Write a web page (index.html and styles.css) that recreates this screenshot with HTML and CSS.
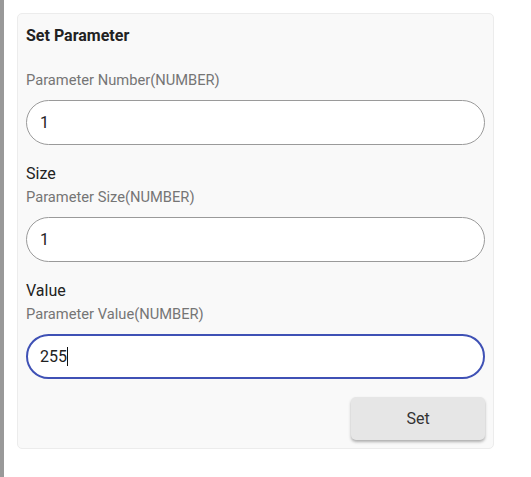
FILE: index.html
```html
<!DOCTYPE html>
<html>
<head>
<meta charset="utf-8">
<link rel="stylesheet" href="styles.css">
</head>
<body>
<div class="page">
  <div class="sidebar"><i></i><i></i><i></i><i></i><i></i><i></i></div>
  <div class="main">
    <div class="card">
      <div class="title">Set Parameter</div>
      <div class="label first">Parameter Number(NUMBER)</div>
      <div class="field"><span>1</span></div>
      <div class="name">Size</div>
      <div class="label">Parameter Size(NUMBER)</div>
      <div class="field"><span>1</span></div>
      <div class="name">Value</div>
      <div class="label">Parameter Value(NUMBER)</div>
      <div class="field focus"><span>255</span><span class="caret"></span></div>
      <div class="actions"><button class="btn">Set</button></div>
    </div>
  </div>
</div>
</body>
</html>
```
FILE: styles.css
```css
html, body { margin: 0; padding: 0; background: #fff; }
body { font-family: Roboto, "Noto Sans", sans-serif; color: #222; }
.page { display: flex; width: 531px; height: 477px; }
.sidebar { width: 4px; background: #999; display: flex; flex-direction: column; padding-top: 21px; }
.sidebar i { display: block; height: 1px; background: #aaa; margin-bottom: 78px; }
.main { flex: 1; padding: 13px 0 0 13px; }
.card { width: 459px; background: #f9f9f9; border: 1px solid #ececec; border-radius: 5px; padding: 12px 8px 8px 8px; display: flex; flex-direction: column; }
.title { font-size: 16px; font-weight: 700; line-height: 20px; color: #222; }
.label { font-size: 14.7px; line-height: 20px; color: #757575; margin-top: 2px; }
.label.first { margin-top: 24px; }
.name { font-size: 16px; line-height: 22px; color: #222; margin-top: 18px; }
.field { box-sizing: border-box; height: 45px; border: 1px solid #9a9a9a; border-radius: 23px; background: #fff; margin-top: 10px; display: flex; align-items: center; padding-left: 13px; font-size: 16px; color: #222; }
.field.focus { border: 2px solid #3f51b5; padding-left: 12px; }
.caret { display: inline-block; width: 1px; height: 19px; background: #111; }
.actions { display: flex; justify-content: flex-end; margin-top: 18px; }
.btn { width: 134px; height: 43px; border: none; border-radius: 5px; background: #e6e6e6; box-shadow: 0 2px 3px rgba(0,0,0,0.3); font-family: Roboto, sans-serif; font-size: 16px; color: #333; }
```
